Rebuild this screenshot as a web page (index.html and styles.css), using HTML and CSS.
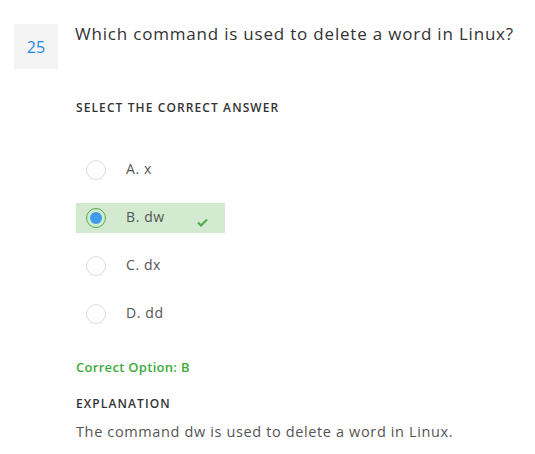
FILE: index.html
```html
<!DOCTYPE html>
<html>
<head>
<meta charset="utf-8">
<link rel="stylesheet" href="styles.css">
</head>
<body>
<div class="page">
  <div class="question">
    <div class="num">25</div>
    <div class="qtext">Which command is used to delete a word in Linux?</div>
  </div>
  <div class="content">
    <div class="label select-label">SELECT THE CORRECT ANSWER</div>
    <div class="options">
      <div class="opt"><span class="radio"></span><span class="otext">A. x</span></div>
      <div class="opt correct"><span class="radio selected"><span class="dot"></span></span><span class="otext">B. dw</span>
        <svg class="check" width="11" height="9" viewBox="0 0 11 9"><path d="M1 4.5 L4 7.5 L10 1.5" fill="none" stroke="#4caf50" stroke-width="2.2"/></svg>
      </div>
      <div class="opt"><span class="radio"></span><span class="otext">C. dx</span></div>
      <div class="opt"><span class="radio"></span><span class="otext">D. dd</span></div>
    </div>
    <div class="answer">Correct Option: B</div>
    <div class="label expl-label">EXPLANATION</div>
    <div class="expl">The command dw is used to delete a word in Linux.</div>
  </div>
</div>
</body>
</html>
```
FILE: styles.css
```css
body {
  margin: 0;
  background: #fff;
  font-family: "Open Sans", "Noto Sans", sans-serif;
  color: #333;
}
.page {
  padding: 24px 0 0 14px;
}
.question {
  display: flex;
  align-items: flex-start;
  gap: 17px;
}
.num {
  width: 44px;
  height: 45px;
  background: #f4f4f4;
  color: #1e88e5;
  font-size: 16px;
  display: flex;
  align-items: center;
  justify-content: center;
}
.qtext {
  font-size: 17px;
  letter-spacing: 0.8px;
  line-height: 20px;
  color: #333;
}
.content {
  margin-left: 62px;
}
.label {
  font-size: 12px;
  font-weight: 600;
  letter-spacing: 1.1px;
  color: #333;
  line-height: 16px;
}
.select-label {
  margin-top: 31px;
}
.options {
  margin-top: 39px;
  display: flex;
  flex-direction: column;
  gap: 18px;
}
.opt {
  width: 149px;
  height: 30px;
  box-sizing: border-box;
  padding-left: 10px;
  display: flex;
  align-items: center;
  font-size: 14px;
  letter-spacing: 0.6px;
  color: #555;
}
.opt.correct {
  background: #d3ead0;
}
.radio {
  width: 20px;
  height: 20px;
  border: 1px solid #ddd;
  border-radius: 50%;
  box-sizing: border-box;
  background: #fff;
  display: flex;
  align-items: center;
  justify-content: center;
  flex: none;
}
.radio.selected {
  border-color: #4caf50;
  background: transparent;
}
.dot {
  width: 12px;
  height: 12px;
  border-radius: 50%;
  background: #3d9be9;
}
.otext {
  margin-left: 20px;
  margin-top: -3px;
}
.check {
  margin-left: 32px;
  margin-top: 8px;
}
.answer {
  margin-top: 30px;
  color: #3cab3c;
  font-size: 13px;
  font-weight: 600;
  letter-spacing: 0.3px;
  line-height: 16px;
}
.expl-label {
  margin-top: 21px;
}
.expl {
  margin-top: 10px;
  font-size: 14.5px;
  letter-spacing: 0.63px;
  color: #555;
  line-height: 20px;
}
```
